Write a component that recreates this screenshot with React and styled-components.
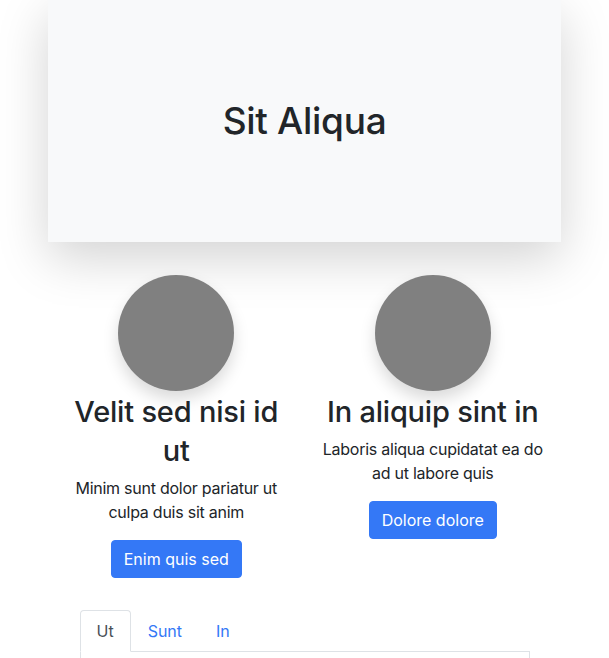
import React from "react";
import styled, { createGlobalStyle } from "styled-components";

const Global = createGlobalStyle`
  html, body { margin: 0; padding: 0; background: #fff; }
  body {
    font-family: Inter, "Noto Sans", "Liberation Sans", sans-serif;
    color: #212529;
    font-size: 16px;
    line-height: 1.5;
  }
  * { box-sizing: border-box; }
`;

const Container = styled.div`
  width: 513px;
  margin: 0 auto;
`;

const Hero = styled.header`
  height: 242px;
  background: #f8f9fa;
  box-shadow: 0 16px 48px rgba(0, 0, 0, 0.175);
  display: flex;
  align-items: center;
  justify-content: center;
`;

const HeroTitle = styled.h1`
  margin: 0;
  font-size: 37px;
  font-weight: 500;
  line-height: 1.2;
  letter-spacing: -0.3px;
`;

const Features = styled.section`
  display: grid;
  grid-template-columns: 1fr 1fr;
  margin-top: 33px;
`;

const Feature = styled.div`
  display: flex;
  flex-direction: column;
  align-items: center;
  text-align: center;
  padding: 0 10px;
`;

const Avatar = styled.div`
  width: 116px;
  height: 116px;
  border-radius: 50%;
  background: #808080;
  box-shadow: 0 8px 16px rgba(0, 0, 0, 0.15);
`;

const FeatureTitle = styled.h2`
  margin: 1px 0 6px;
  font-size: 29px;
  font-weight: 500;
  line-height: 39px;
  letter-spacing: -0.2px;
`;

const FeatureText = styled.p`
  margin: 0 0 16px;
  font-size: 16px;
  line-height: 24px;
  letter-spacing: -0.25px;
`;

const Button = styled.button`
  font-family: inherit;
  font-size: 16px;
  line-height: 24px;
  padding: 6px 12px;
  border: 1px solid #3478f6;
  border-radius: 4px;
  background: #3478f6;
  color: #fff;
  cursor: pointer;
`;

const TabsBlock = styled.div`
  width: 450px;
  margin: 32px auto 0;
`;

const TabList = styled.ul`
  display: flex;
  list-style: none;
  margin: 0;
  padding: 0;
  border-bottom: 1px solid #dee2e6;
`;

const Tab = styled.li`
  margin-bottom: -1px;
  padding: 8px 16px;
  font-size: 16px;
  line-height: 24px;
  border: 1px solid ${(p) => (p.$active ? "#dee2e6" : "transparent")};
  border-bottom-color: ${(p) => (p.$active ? "#fff" : "transparent")};
  border-radius: 4px 4px 0 0;
  background: ${(p) => (p.$active ? "#fff" : "transparent")};
  color: ${(p) => (p.$active ? "#495057" : "#3478f6")};
`;

const TabPanel = styled.div`
  border: 1px solid #dee2e6;
  border-top: none;
  height: 60px;
`;

const features = [
  {
    title: "Velit sed nisi id ut",
    text: "Minim sunt dolor pariatur ut culpa duis sit anim",
    cta: "Enim quis sed",
  },
  {
    title: "In aliquip sint in",
    text: "Laboris aliqua cupidatat ea do ad ut labore quis",
    cta: "Dolore dolore",
  },
];

export default function App() {
  return (
    <>
      <Global />
      <Container>
        <Hero>
          <HeroTitle>Sit Aliqua</HeroTitle>
        </Hero>
        <Features>
          {features.map((f) => (
            <Feature key={f.title}>
              <Avatar />
              <FeatureTitle>{f.title}</FeatureTitle>
              <FeatureText>{f.text}</FeatureText>
              <Button>{f.cta}</Button>
            </Feature>
          ))}
        </Features>
        <TabsBlock>
          <TabList>
            <Tab $active>Ut</Tab>
            <Tab>Sunt</Tab>
            <Tab>In</Tab>
          </TabList>
          <TabPanel />
        </TabsBlock>
      </Container>
    </>
  );
}
